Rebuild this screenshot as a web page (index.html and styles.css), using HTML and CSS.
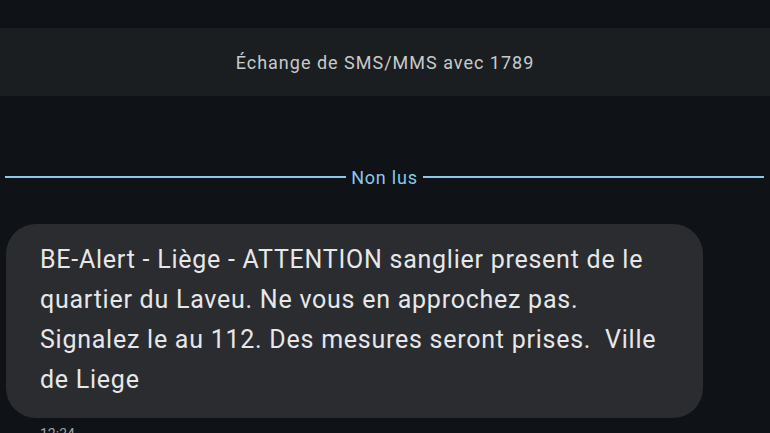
FILE: index.html
```html
<!DOCTYPE html>
<html lang="fr">
<head>
<meta charset="utf-8">
<link rel="stylesheet" href="styles.css">
</head>
<body>
<div class="screen">
  <div class="topgap"></div>
  <div class="banner">Échange de SMS/MMS avec 1789</div>
  <div class="divider"><span class="line"></span><span class="label">Non lus</span><span class="line"></span></div>
  <div class="bubble">BE-Alert - Liège - ATTENTION sanglier present de le<br>quartier du Laveu. Ne vous en approchez pas.<br>Signalez le au 112. Des mesures seront prises.&nbsp; Ville<br>de Liege</div>
  <div class="time">12:34</div>
</div>
</body>
</html>
```
FILE: styles.css
```css
html, body { margin: 0; padding: 0; background: #0f1216; }
.screen { width: 770px; height: 433px; overflow: hidden; background: #0f1216; font-family: Roboto, "Noto Sans", sans-serif; display: flex; flex-direction: column; }
.topgap { height: 28px; flex: none; }
.banner { height: 68px; flex: none; background: #1b1e21; color: #c8cacc; font-size: 18px; letter-spacing: 1px; display: flex; align-items: center; justify-content: center; }
.divider { margin-top: 71px; height: 20px; display: flex; align-items: center; gap: 5px; padding: 0 6px 0 5px; }
.line { flex: 1; height: 2px; background: #8cc8ea; }
.label { color: #8cc8ea; font-size: 18px; letter-spacing: 0.8px; }
.bubble { margin: 37px 0 0 6px; width: 697px; box-sizing: border-box; height: 194px; background: #2a2c2f; border-radius: 30px; padding: 16px 20px 0 34px; color: #e6e7e9; font-size: 25px; letter-spacing: 0.75px; line-height: 40px; flex: none; white-space: nowrap; }
.time { margin: 8px 0 0 40px; color: #a0a3a7; font-size: 14px; }
```
